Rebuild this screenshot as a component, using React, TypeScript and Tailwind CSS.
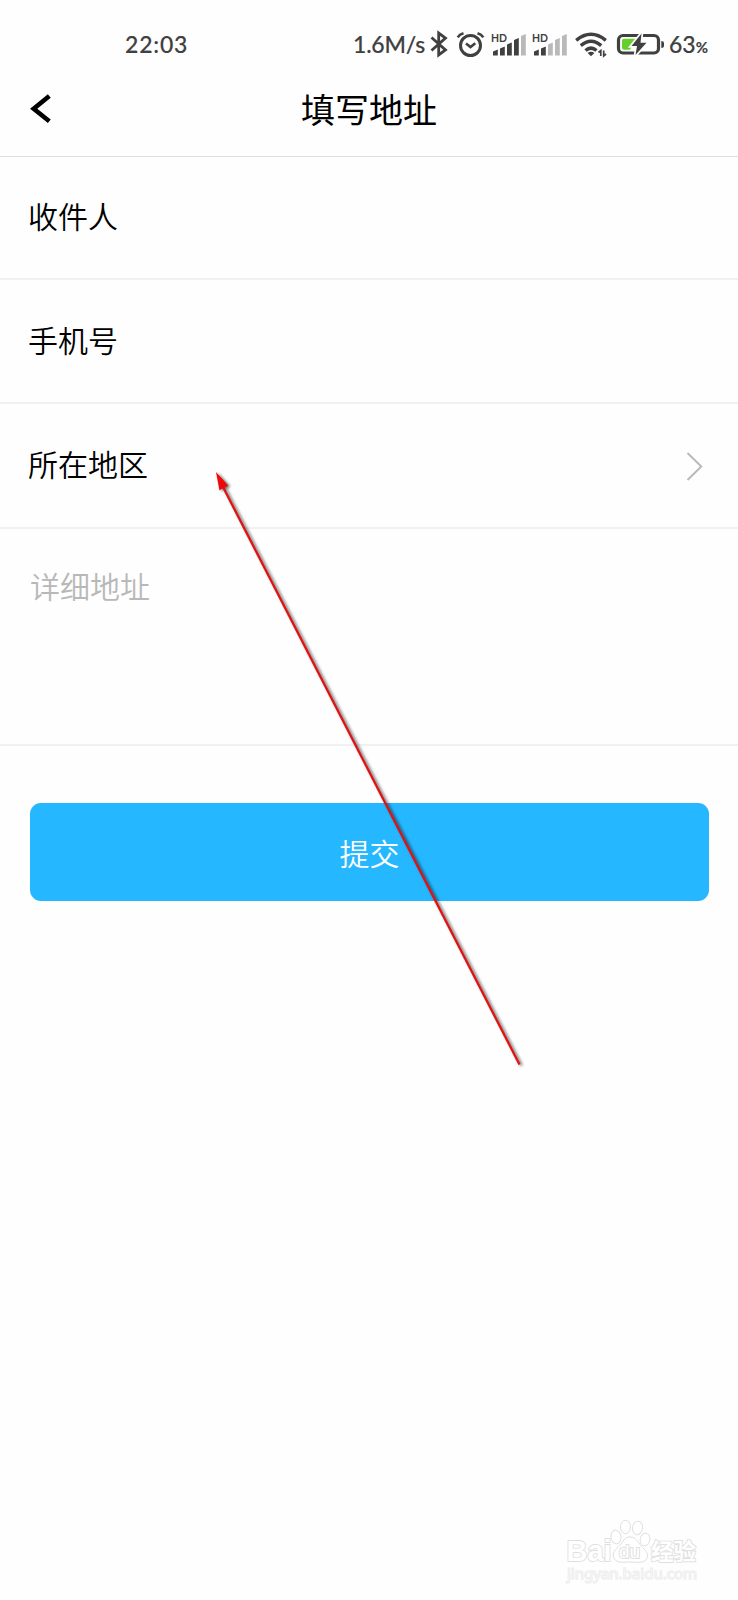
import type { ReactNode } from "react";

function BluetoothIcon() {
  return (
    <svg className="h-[30px] w-[22px] shrink-0" viewBox="428 29 22 30" fill="none" stroke="#404040" strokeWidth="2.8">
      <path d="M431.500 37.500 L445.500 50 L438.700 55 V33 L445.500 38 L431.500 50.500" strokeLinejoin="miter" />
    </svg>
  );
}

function AlarmIcon() {
  return (
    <svg className="ml-[5px] h-[30px] w-[30px] shrink-0" viewBox="455 29 30 30" fill="none" stroke="#404040">
      <circle cx="470.500" cy="45.500" r="10" strokeWidth="3" />
      <path d="M466 43.500 L470.500 47 L475.300 43.200" strokeWidth="2.6" />
      <path d="M457.700 37.300 Q459.500 34.300 463.500 33.200 M477.500 33.200 Q481.500 34.300 483.300 37.300" strokeWidth="2.6" />
    </svg>
  );
}

function SignalIcon({ active }: { active: number }) {
  const tops = [50, 47, 43, 38.5, 34.5];
  return (
    <svg className="h-[30px] w-[41px] shrink-0" viewBox="488 29 41 30">
      {tops.map((top, i) => {
        const x = 493 + i * 7;
        return (
          <path
            key={top}
            d={`M${x} ${top + 1.5} L${x + 4.8} ${top - 0.5} V55.500 H${x} Z`}
            fill={i < active ? "#404040" : "#b9b9b9"}
          />
        );
      })}
      <rect x="490" y="32" width="17" height="11.200" fill="#fefefe" />
      <text x="491" y="42" className="font-['Lato'] text-[12px] font-bold" textLength="16" lengthAdjust="spacingAndGlyphs" fill="#404040">
        HD
      </text>
    </svg>
  );
}

function WifiIcon() {
  return (
    <svg className="ml-[4px] h-[30px] w-[36px] shrink-0" viewBox="574 29 36 30" fill="none" stroke="#404040" strokeWidth="3.500">
      <path d="M576.200 40.300 Q591 28.300 605.800 40.300" />
      <path d="M580.800 45.600 Q591 37 601.200 45.600" />
      <path d="M585.500 50.500 Q591 45.700 596.500 50.500" />
      <path d="M587.600 53 Q591 50.300 594.400 53 L591 56.200 Z" fill="#404040" stroke="none" />
      <path d="M600.800 56 V50.500 L598.500 52.500 M603.700 50.500 V56 L606 54" strokeWidth="1.700" />
    </svg>
  );
}

function BatteryIcon() {
  return (
    <svg className="ml-[5px] h-[30px] w-[50px] shrink-0" viewBox="615 29 50 30">
      <rect x="618.500" y="35.500" width="40" height="17.500" rx="4.500" fill="#fefefe" stroke="#404040" strokeWidth="3.200" />
      <path d="M624 38.700 H636 L630 49.800 H624 Q622 49.800 622 47.800 V40.700 Q622 38.700 624 38.700 Z" fill="#66cf2b" />
      <path d="M661.300 41 Q664 41 664 43 V46 Q664 48 661.300 48 Z" fill="#404040" />
      <path d="M641.500 33.500 L631.500 46 H637 L635.500 55 L646.500 42.700 H640.500 Z" fill="#404040" stroke="#fefefe" strokeWidth="3.500" paintOrder="stroke" />
    </svg>
  );
}

function Row({ children, className }: { children: ReactNode; className: string }) {
  return (
    <div className={`flex border-b-2 border-[#f1f1f1] text-[30px] leading-[44px] font-[350] text-black ${className}`}>{children}</div>
  );
}

function Watermark() {
  return (
    <svg className="h-[68px] w-[140px]" viewBox="564 1516 140 68" fill="#fff" stroke="#e0e0e0" strokeWidth="1">
      <text x="566.500" y="1561" className="font-['Liberation_Sans'] text-[30px] font-bold" textLength="45" lengthAdjust="spacingAndGlyphs" paintOrder="stroke" strokeWidth="1.800">
        Bai
      </text>
      <ellipse cx="616" cy="1537" rx="5" ry="6.700" transform="rotate(-8 616 1537)" />
      <ellipse cx="625.500" cy="1527" rx="5" ry="6.700" />
      <ellipse cx="637.500" cy="1528" rx="5" ry="6.700" transform="rotate(8 637.500 1528)" />
      <ellipse cx="645" cy="1539.500" rx="4.800" ry="6.300" transform="rotate(12 645 1539.500)" />
      <path d="M630 1537 C636 1537 638 1542 641 1546 C645 1550 649 1553 647 1558 C644.500 1564 637 1562 630 1562 C623 1562 616 1564 613.500 1557 C612 1551 618 1548 621 1544 C624 1540 625 1537 630 1537 Z" />
      <text x="619" y="1558" className="font-['Liberation_Sans'] text-[19px]" textLength="21" lengthAdjust="spacingAndGlyphs" paintOrder="stroke" strokeWidth="2">
        du
      </text>
      <text x="651" y="1560" className="font-['Noto_Sans_CJK_SC',sans-serif] text-[23px] font-bold" textLength="45" lengthAdjust="spacingAndGlyphs" paintOrder="stroke" strokeWidth="1.800">
        经验
      </text>
      <text x="567" y="1578.500" className="font-['Noto_Sans'] text-[15px]" textLength="130" lengthAdjust="spacingAndGlyphs" paintOrder="stroke" fill="#f4f4f4" stroke="#e8e8e8" strokeWidth="1">
        jingyan.baidu.com
      </text>
    </svg>
  );
}

export default function App() {
  return (
    <div className="relative flex h-[1600px] w-[738px] flex-col overflow-hidden bg-[#fefefe] font-['Noto_Sans_CJK_SC',sans-serif]">
      <div className="flex h-[70px] shrink-0 items-start pt-[29px] font-['Lato'] text-[23px] leading-[31px] font-medium text-[#404040] [-webkit-text-stroke:0.15px_#404040]">
        <span className="ml-[125px] w-[228px] tracking-[0.8px]">22:03</span>
        <span className="w-[75px] tracking-[-0.2px] whitespace-nowrap">1.6M/s</span>
        <BluetoothIcon />
        <AlarmIcon />
        <div className="ml-[3px] flex">
          <SignalIcon active={4} />
          <SignalIcon active={2} />
        </div>
        <WifiIcon />
        <BatteryIcon />
        <span className="ml-[4px] whitespace-nowrap">
          63<span className="text-[15px] font-bold">%</span>
        </span>
      </div>

      <header className="flex h-[87px] shrink-0 items-start border-b border-[#dedede]">
        <svg className="mt-[21px] ml-[28px] h-[36px] w-[26px]" viewBox="28 91 26 36" fill="none" stroke="#000" strokeWidth="4.600">
          <path d="M49.300 96 L33.700 108.700 L49.300 121.300" />
        </svg>
        <h1 className="-ml-[54px] flex-1 pt-[14px] text-center text-[34px] leading-[50px] text-black">填写地址</h1>
      </header>

      <main className="flex flex-col">
        <Row className="h-[123px] pt-[36px] pl-[28px]">收件人</Row>
        <Row className="h-[124px] pt-[37px] pl-[28px]">手机号</Row>
        <Row className="h-[125px] justify-between pt-[37px] pr-[34px] pl-[28px]">
          <span>所在地区</span>
          <svg className="mt-[9px] h-[32px] w-[20px]" viewBox="684 450 20 32" fill="none" stroke="#b8b8b8" strokeWidth="1.900">
            <path d="M687.500 453 L701.300 466.500 L687.500 480" />
          </svg>
        </Row>
        <Row className="h-[217px] pt-[34px] pl-[30px]">
          <span className="text-[#b8b8b8]">详细地址</span>
        </Row>
        <button className="mt-[57px] mr-[29px] ml-[30px] h-[98px] rounded-[11px] bg-[#25b7ff] pb-px text-[30px] leading-[44px] font-[350] text-white">
          提交
        </button>
      </main>

      <div className="mt-auto flex h-[84px] justify-end pr-[34px]">
        <Watermark />
      </div>

      <svg className="pointer-events-none absolute top-[460px] left-[200px] h-[620px] w-[340px] drop-shadow-[2px_1px_1.5px_rgba(0,0,0,0.6)]" viewBox="200 460 340 620">
        <path d="M222 485 L519.500 1064.500" stroke="#e01212" strokeWidth="2.300" />
        <path d="M216 472 L228.200 485.500 L219.400 490.200 Z" fill="#f00808" />
      </svg>
    </div>
  );
}
